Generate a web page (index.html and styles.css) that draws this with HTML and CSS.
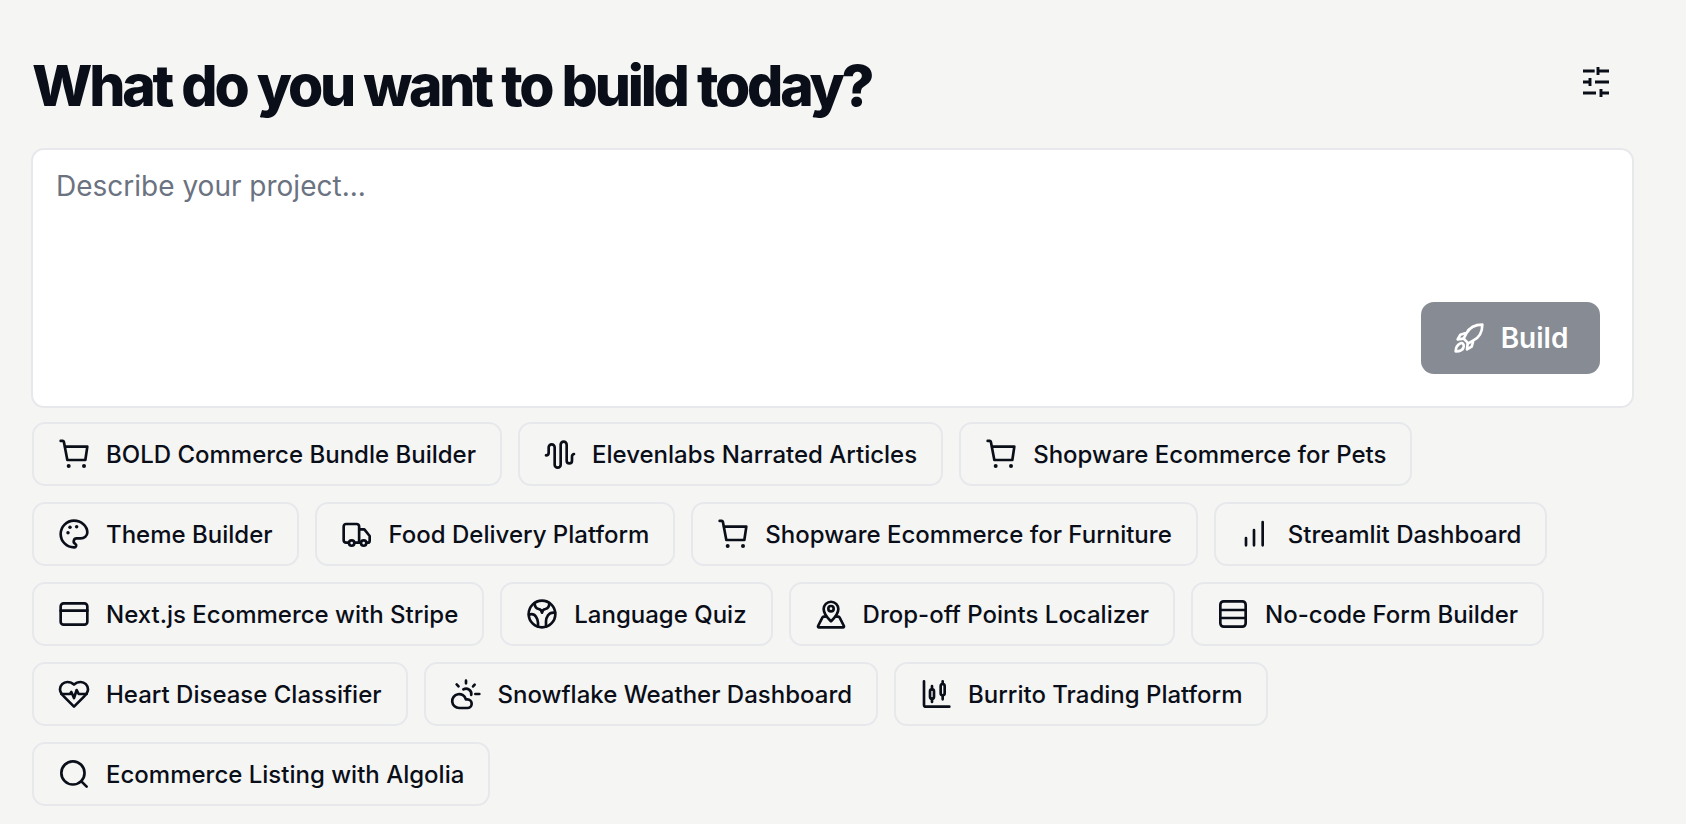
FILE: index.html
```html
<!DOCTYPE html>
<html lang="en">
<head>
    <meta charset="UTF-8">
    <meta name="viewport" content="width=device-width, initial-scale=1.0">
    <title>What do you want to build today?</title>
    <link rel="stylesheet" href="styles.css">
</head>
<body>

    <main class="page">
        <header class="page-header">
            <h1>What do you want to build today?</h1>
            <button class="settings-button" aria-label="Settings">
                <svg class="icon icon-heavy" viewBox="0 0 24 24"><path d="M2.250 3.750H11M13.500 .75V6.750M13.500 3.750H21.750M2.250 12H7.500M7.500 9V15M11.250 12H21.750M2.250 20.250H12M15.750 17.250V23.250M15.750 20.250H21.750"/></svg>
            </button>
        </header>

        <form class="prompt">
            <textarea class="prompt-input" placeholder="Describe your project..."></textarea>
            <div class="prompt-actions">
                <button type="button" class="build-button">
                    <svg class="icon" viewBox="0 0 24 24"><path d="M22 2c-5.500 0-9.500 2-12 6.500L8 12.500l3.500 3.500 3.500-2C20 11.500 22 7.500 22 2Z"/><path d="M9 8.500 5.500 9.500 3.500 13l4.500-.5M15 15l-1 3.500-3.500 2 .5-4.500"/><path d="M5.500 16c-2 1-3.500 3.500-3.500 6 3 0 5.500-1 6-3.500.3-2-1-3.200-2.500-2.500Z"/></svg>
                    Build
                </button>
            </div>
        </form>

        <div class="chips">
            <a class="chip">
                <svg class="icon" viewBox="0 0 24 24"><path d="M2 2.200h1.500c.5 0 .8.300.9.700L7 16.500h13.500M5 6.500h17l-1.500 10"/><circle class="dot" cx="8" cy="21" r="1.500"/><circle class="dot" cx="19.500" cy="21" r="1.500"/></svg>
                BOLD Commerce Bundle Builder
            </a>
            <a class="chip">
                <svg class="icon" viewBox="0 0 24 24"><path d="M1.500 13a2 2 0 0 0 2-2V7a2.250 2.250 0 0 1 4.500 0v13a2.250 2.250 0 0 0 4.500 0V5a2.250 2.250 0 0 1 4.500 0v12a2 2 0 0 0 4 0v-3a2 2 0 0 1 1.500-2"/></svg>
                Elevenlabs Narrated Articles
            </a>
            <a class="chip">
                <svg class="icon" viewBox="0 0 24 24"><path d="M2 2.200h1.500c.5 0 .8.300.9.700L7 16.500h13.500M5 6.500h17l-1.500 10"/><circle class="dot" cx="8" cy="21" r="1.500"/><circle class="dot" cx="19.500" cy="21" r="1.500"/></svg>
                Shopware Ecommerce for Pets
            </a>
            <a class="chip">
                <svg class="icon" viewBox="0 0 24 24"><path d="M12 22a10 10 0 0 1 0-20c5.500 0 10 4 10 8.900 0 1.200-.5 2.300-1.500 3.100-.9.800-2.200 1.300-3.500 1.300h-2.800a2.200 2.200 0 0 0-1.100 4.200 1.400 1.400 0 0 1-1.100 2.500Z"/><circle class="dot" cx="7.500" cy="11" r="1.300"/><circle class="dot" cx="9" cy="7" r="1.300"/><circle class="dot" cx="14" cy="6.500" r="1.300"/></svg>
                Theme Builder
            </a>
            <a class="chip">
                <svg class="icon" viewBox="0 0 24 24"><path d="M5.500 18.500H3.800A1.800 1.800 0 0 1 2 16.700V6.300a1.800 1.800 0 0 1 1.800-1.800h8a1.800 1.800 0 0 1 1.800 1.800v12.200M10.500 18.500h4M14 8.500h3.500l4 5v3.500a1.500 1.500 0 0 1-1.500 1.500h-.5"/><circle cx="8" cy="18.800" r="2"/><circle cx="17" cy="18.800" r="2"/></svg>
                Food Delivery Platform
            </a>
            <a class="chip">
                <svg class="icon" viewBox="0 0 24 24"><path d="M2 2.200h1.500c.5 0 .8.300.9.700L7 16.500h13.500M5 6.500h17l-1.500 10"/><circle class="dot" cx="8" cy="21" r="1.500"/><circle class="dot" cx="19.500" cy="21" r="1.500"/></svg>
                Shopware Ecommerce for Furniture
            </a>
            <a class="chip">
                <svg class="icon" viewBox="0 0 24 24"><path d="M4.500 15v5.500M10.500 9v11.500M17 3v17.500"/></svg>
                Streamlit Dashboard
            </a>
            <a class="chip">
                <svg class="icon" viewBox="0 0 24 24"><rect x="2" y="4" width="20" height="16" rx="2.200"/><path d="M2 9.500h20"/></svg>
                Next.js Ecommerce with Stripe
            </a>
            <a class="chip">
                <svg class="icon" viewBox="0 0 24 24"><circle cx="12" cy="12" r="10"/><path d="M6.500 3.800c0 2.200.8 4 3 4.500 1.400.3 2.200 1.200 2.500 2.700.3-1.500 1-2.400 2.500-2.700 2.200-.5 3-2.300 3-4.500M2.200 12.500c2.500-.8 4.300 0 5.300 1.500s1.500 2.500 1.500 4.500v3M21.800 11c-2.300-.3-4.300.5-5.300 2-.8 1.200-1.500 2.500-1.500 4.500v4"/></svg>
                Language Quiz
            </a>
            <a class="chip">
                <svg class="icon" viewBox="0 0 24 24"><path d="M12 17.500c-1.500-1.500-5.500-5-5.500-9.200a5.500 5.500 0 0 1 11 0c0 4.200-4 7.700-5.500 9.200Z"/><circle cx="12" cy="8" r="2"/><path d="M7.800 14H6.500a1 1 0 0 0-.9.600L2.300 21a.7.700 0 0 0 .7 1h18a.7.700 0 0 0 .7-1l-3.300-6.400a1 1 0 0 0-.9-.6h-1.300"/></svg>
                Drop-off Points Localizer
            </a>
            <a class="chip">
                <svg class="icon" viewBox="0 0 24 24"><rect x="2.500" y="2.500" width="19" height="19" rx="2.500"/><path d="M2.500 9h19M2.500 15h19"/></svg>
                No-code Form Builder
            </a>
            <a class="chip">
                <svg class="icon" viewBox="0 0 24 24"><path d="M19.500 14c1.500-1.500 3-3.200 3-5.500A5.500 5.500 0 0 0 17 3c-1.800 0-3.500.5-5 2-1.500-1.500-3.200-2-5-2a5.500 5.500 0 0 0-5.500 5.500c0 2.300 1.500 4 3 5.500l7.500 7.500Z"/><path d="M2.500 12h6.500l1-1.500 2 4.500 2-6 1.500 3h6"/></svg>
                Heart Disease Classifier
            </a>
            <a class="chip">
                <svg class="icon" viewBox="0 0 24 24"><path d="M12 2v2M5 4.800l1.400 1.500M19 12h3M18.500 5l-1.200 1.300M15.950 12.650a4 4 0 0 0-5.930-4.130"/><path d="M13 22.500H7a5.200 5.200 0 1 1 4.900-6.500H13a3.250 3.250 0 0 1 0 6.500Z"/></svg>
                Snowflake Weather Dashboard
            </a>
            <a class="chip">
                <svg class="icon" viewBox="0 0 24 24"><path d="M3 2.500v17.500a1.500 1.500 0 0 0 1.500 1.500H22M9 6v2.500M9 15.500V18M17 2.500v2M17 13v3"/><rect x="7.500" y="8.500" width="3" height="7" rx="1.500"/><rect x="15.500" y="4.500" width="3" height="8.500" rx="1.500"/></svg>
                Burrito Trading Platform
            </a>
            <a class="chip">
                <svg class="icon" viewBox="0 0 24 24"><circle cx="11.200" cy="11.200" r="8.700"/><path d="M17.500 17.500l4 4"/></svg>
                Ecommerce Listing with Algolia
            </a>
        </div>
    </main>

</body>
</html>
```

FILE: styles.css
```css
* {
    box-sizing: border-box;
}
body {
    font-family: Inter, 'Liberation Sans', sans-serif;
    background-color: #f5f5f3;
    color: #0a0e18;
    margin: 0;
}
.page {
    padding: 0 52px 0 31px;
}
.page-header {
    display: flex;
    justify-content: space-between;
    align-items: center;
    height: 148px;
    padding-top: 16px;
}
h1 {
    font-size: 57px;
    font-weight: 800;
    letter-spacing: -3.2px;
    word-spacing: 1px;
    line-height: 1;
    margin: 6px 0 0 1px;
}
.settings-button {
    display: flex;
    justify-content: center;
    width: 76px;
    padding: 0;
    background: none;
    border: none;
    color: inherit;
    cursor: pointer;
}
.icon {
    flex: none;
    width: 32px;
    height: 32px;
    fill: none;
    stroke: currentColor;
    stroke-width: 2;
    stroke-linecap: round;
    stroke-linejoin: round;
}
.icon-heavy {
    stroke-width: 2.2;
    stroke-linecap: butt;
}
.icon .dot {
    fill: currentColor;
    stroke: none;
}
.prompt {
    display: flex;
    flex-direction: column;
    height: 260px;
    padding: 19px 32px 32px 23px;
    background-color: white;
    border: 2px solid #e7e8ec;
    border-radius: 13px;
}
.prompt-input {
    flex: 1;
    min-height: 0;
    padding: 0;
    font-family: inherit;
    font-size: 28px;
    color: inherit;
    border: none;
    outline: none;
    resize: none;
}
.prompt-input::placeholder {
    color: #6b7280;
    opacity: 1;
}
.prompt-actions {
    display: flex;
    justify-content: flex-end;
}
.build-button {
    display: flex;
    align-items: center;
    justify-content: center;
    gap: 16px;
    width: 179px;
    height: 72px;
    padding: 0;
    font-family: inherit;
    font-size: 28px;
    font-weight: 600;
    color: white;
    background-color: #878b94;
    border: none;
    border-radius: 13px;
    cursor: not-allowed;
}
.chips {
    display: flex;
    flex-wrap: wrap;
    gap: 16px;
    margin-top: 14px;
    padding-left: 1px;
}
.chip {
    display: flex;
    align-items: center;
    gap: 16px;
    height: 64px;
    padding: 0 24px;
    font-size: 24px;
    font-weight: 500;
    white-space: nowrap;
    border: 2px solid #e7e8ec;
    border-radius: 13px;
    cursor: pointer;
}
```
